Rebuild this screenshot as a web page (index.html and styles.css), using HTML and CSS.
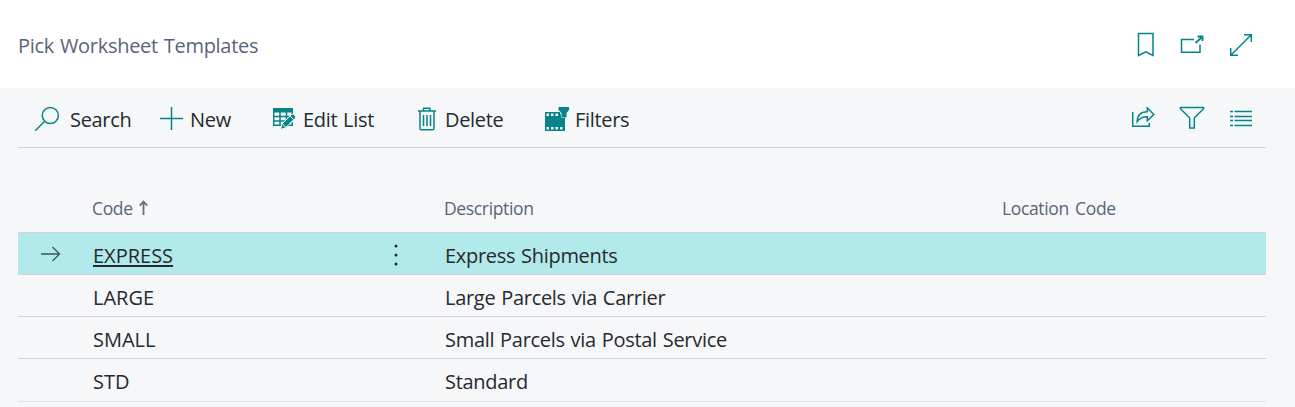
FILE: index.html
```html
<!DOCTYPE html>
<html lang="en">
<head>
    <meta charset="UTF-8">
    <meta name="viewport" content="width=device-width, initial-scale=1.0">
    <title>Pick Worksheet Templates</title>
    <link rel="stylesheet" href="styles.css">
</head>
<body>
    <header class="page-header">
        <h1>Pick Worksheet Templates</h1>
        <div class="header-actions">
            <svg class="icon" width="18" height="26" viewBox="0 0 18 26"><path d="M1.500 1.500h14.500v22l-7.250-3.700-7.250 3.700z"/></svg>
            <svg class="icon" width="24" height="20" viewBox="0 0 24 20"><path d="M14 4.500H1.500v12.800h18.500V9.500"/><path class="bold" d="m15.500 8 6.500-6M17.500 1.500h5v4.500"/></svg>
            <svg class="icon" width="24" height="24" viewBox="0 0 24 24"><path d="M2 22 22 2M15 1.700h7.300V9M1.700 15v7.300H9"/></svg>
        </div>
    </header>

    <main>
        <div class="toolbar">
            <button class="search">
                <svg class="icon" width="26" height="26" viewBox="0 0 26 26"><circle cx="16.300" cy="9.500" r="8"/><path d="M10.700 15.200 1.200 24.700"/></svg>
                <span>Search</span>
            </button>
            <button class="new">
                <svg class="icon" width="24" height="24" viewBox="0 0 24 24"><path d="M0 11.500h23M11.500 0v23"/></svg>
                <span>New</span>
            </button>
            <button class="edit">
                <svg class="icon" width="24" height="24" viewBox="0 0 24 24">
                    <path class="solid" d="M0 1h20v4.500H0z"/>
                    <path d="M.700 5v13.300H9M0 9.500h17M0 14h12M7 5v13M13.500 5v9M19.300 5v3M14 18.300h5.300v-3"/>
                    <path class="pencil" d="m7.500 22.500 1.500-5.500 9.500-9.500c1.700-1.300 5 1.500 3.700 3.700l-9.500 9.500z"/>
                    <path class="cut" d="m9.500 17 3.200 3.200M16.800 8.800l4 4"/>
                </svg>
                <span>Edit List</span>
            </button>
            <button class="delete">
                <svg class="icon" width="18" height="24" viewBox="0 0 18 24"><path d="M0 4h18M5.500 4V1.200h6.500V4M2 4v17.500q0 1.200 1.200 1.200h11.600q1.200 0 1.200-1.200V4M5.500 8v11M9 8v11M12.500 8v11"/></svg>
                <span>Delete</span>
            </button>
            <button class="filters">
                <svg class="icon" width="25" height="26" viewBox="0 0 25 26">
                    <path class="solid" d="M0 6h15l1.500 6H20V25H0z"/>
                    <path class="holes" d="M1.500 7.500H4V10H1.500zM6 7.500h2.500V10H6zM10.500 7.500H13V10h-2.500zM1.500 21H4v2.500H1.500zM6 21h2.500v2.500H6zM10.500 21H13v2.500h-2.500zM15 21h2.500v2.500H15z"/>
                    <path class="solid" d="M13.500 1H24v3l-2.500 3v4.500h-5V7l-3-3z"/>
                </svg>
                <span>Filters</span>
            </button>
            <div class="toolbar-actions">
                <svg class="icon" width="24" height="24" viewBox="0 0 24 24"><path d="M1.700 6v14.300h16.600V17M6.200 15.500C6.300 9 10 5.700 16.300 5.700V2l6.500 6.500-6.500 6.200v-4c-5 0-7.600 1.200-10.100 4.800z"/></svg>
                <svg class="icon" width="26" height="24" viewBox="0 0 26 24"><path d="M1.500 1.500h23v1.200L15.300 12v10h-4.600V12L1.500 2.700z"/></svg>
                <svg class="icon" width="22" height="18" viewBox="0 0 22 18"><path class="list" d="M0 2.500h3M4.500 2.500H22M0 7.500h3M4.500 7.500H22M0 11.500h3M4.500 11.500H22M0 16.500h3M4.500 16.500H22"/></svg>
            </div>
        </div>

        <table>
            <colgroup>
                <col class="col-marker">
                <col class="col-code">
                <col class="col-menu">
                <col class="col-description">
                <col class="col-location">
            </colgroup>
            <thead>
                <tr>
                    <th></th>
                    <th>Code <svg class="sort" width="9" height="15" viewBox="0 0 9 15"><path d="M4.500 15V2M.800 5.700l3.700-4 3.700 4"/></svg></th>
                    <th></th>
                    <th>Description</th>
                    <th>Location Code</th>
                </tr>
            </thead>
            <tbody>
                <tr class="selected">
                    <td class="marker"><svg class="arrow" width="20" height="16" viewBox="0 0 20 16"><path d="M0 8h18.500M11.500 1l7 7-7 7"/></svg></td>
                    <td class="code"><a class="code-link">EXPRESS</a></td>
                    <td class="menu"><svg width="4" height="22" viewBox="0 0 4 22"><circle cx="2" cy="2" r="1.500"/><circle cx="2" cy="11" r="1.500"/><circle cx="2" cy="20" r="1.500"/></svg></td>
                    <td>Express Shipments</td>
                    <td></td>
                </tr>
                <tr>
                    <td></td>
                    <td class="code">LARGE</td>
                    <td></td>
                    <td>Large Parcels via Carrier</td>
                    <td></td>
                </tr>
                <tr>
                    <td></td>
                    <td class="code">SMALL</td>
                    <td></td>
                    <td>Small Parcels via Postal Service</td>
                    <td></td>
                </tr>
                <tr>
                    <td></td>
                    <td class="code">STD</td>
                    <td></td>
                    <td>Standard</td>
                    <td></td>
                </tr>
            </tbody>
        </table>
    </main>
</body>
</html>
```
FILE: styles.css
```css
* {
    box-sizing: border-box;
}
body {
    margin: 0;
    height: 407px;
    overflow: hidden;
    background-color: #f5f7f9;
    color: #262a2e;
    font-family: "Open Sans", "Noto Sans", sans-serif;
    font-size: 20px;
    letter-spacing: -0.32px;
    word-spacing: 1px;
}
.page-header {
    display: flex;
    justify-content: space-between;
    align-items: center;
    height: 88px;
    padding: 1px 42px 0 18px;
    background: white;
}
h1 {
    margin: 0;
    padding-top: 2px;
    color: #596478;
    font-size: 20px;
    font-weight: 400;
    letter-spacing: -0.29px;
}
.header-actions {
    display: flex;
    align-items: center;
    gap: 25px;
}
svg {
    display: block;
    flex: none;
}
.icon {
    fill: none;
    stroke: #078489;
    stroke-width: 1.5;
}
.bold {
    stroke-width: 1.8;
}
.list {
    stroke-width: 1.7;
}
.solid {
    fill: #078489;
    stroke: none;
}
.pencil {
    fill: #078489;
    stroke: #f5f7f9;
    stroke-width: 1;
}
.cut {
    stroke: #f5f7f9;
    stroke-width: 1;
}
.holes {
    fill: #f5f7f9;
    stroke: none;
}
main {
    padding: 0 29px 0 18px;
}
.toolbar {
    display: flex;
    height: 60px;
    padding-left: 16px;
    border-bottom: 1px solid #cfd2d9;
}
button {
    display: flex;
    align-items: center;
    gap: 6px;
    padding: 2px 0 0;
    border: none;
    background: none;
    color: inherit;
    font: inherit;
    letter-spacing: inherit;
    word-spacing: inherit;
    white-space: nowrap;
}
button span {
    padding-top: 2px;
}
.search {
    width: 126px;
    gap: 10px;
}
.new {
    width: 113px;
}
.edit {
    width: 145px;
}
.delete {
    width: 127px;
    gap: 9px;
}
.filters {
    gap: 5px;
}
.toolbar-actions {
    display: flex;
    align-items: center;
    gap: 25px;
    margin-left: auto;
    padding-right: 14px;
}
.toolbar-actions .icon:nth-child(2) {
    margin-left: -1px;
}
table {
    width: 100%;
    table-layout: fixed;
    border-collapse: separate;
    border-spacing: 0;
}
.col-marker {
    width: 65px;
}
.col-code {
    width: 274px;
}
.col-menu {
    width: 78px;
}
.col-description {
    width: 558px;
}
th, td {
    padding: 0 10px;
    border-bottom: 1px solid #d2d3d8;
    text-align: left;
    white-space: nowrap;
}
th {
    height: 85px;
    padding: 36px 9px 0;
    color: #596478;
    font-size: 17.5px;
    font-weight: 400;
    letter-spacing: -0.35px;
    word-spacing: 2px;
}
td {
    height: 42px;
    padding-top: 4px;
    line-height: 30px;
    letter-spacing: -0.3px;
}
td.code {
    letter-spacing: 0;
}
tr:last-child td {
    height: 43px;
}
tbody tr:last-child td {
    padding-top: 3px;
    border-bottom-color: #e1e3e6;
}
.selected td {
    background-color: #b2e9eb;
}
.code-link {
    text-decoration: underline;
    text-decoration-thickness: 2px;
    text-underline-offset: 2px;
}
.sort {
    display: inline-block;
    fill: none;
    stroke: #6c6e72;
    stroke-width: 1.8;
}
td.marker {
    padding: 0 0 0 23px;
}
.arrow {
    fill: none;
    stroke: #3f5558;
    stroke-width: 1.3;
}
td.menu {
    padding: 2px 0 0 37px;
}
.menu svg {
    fill: #262a2e;
}
```
